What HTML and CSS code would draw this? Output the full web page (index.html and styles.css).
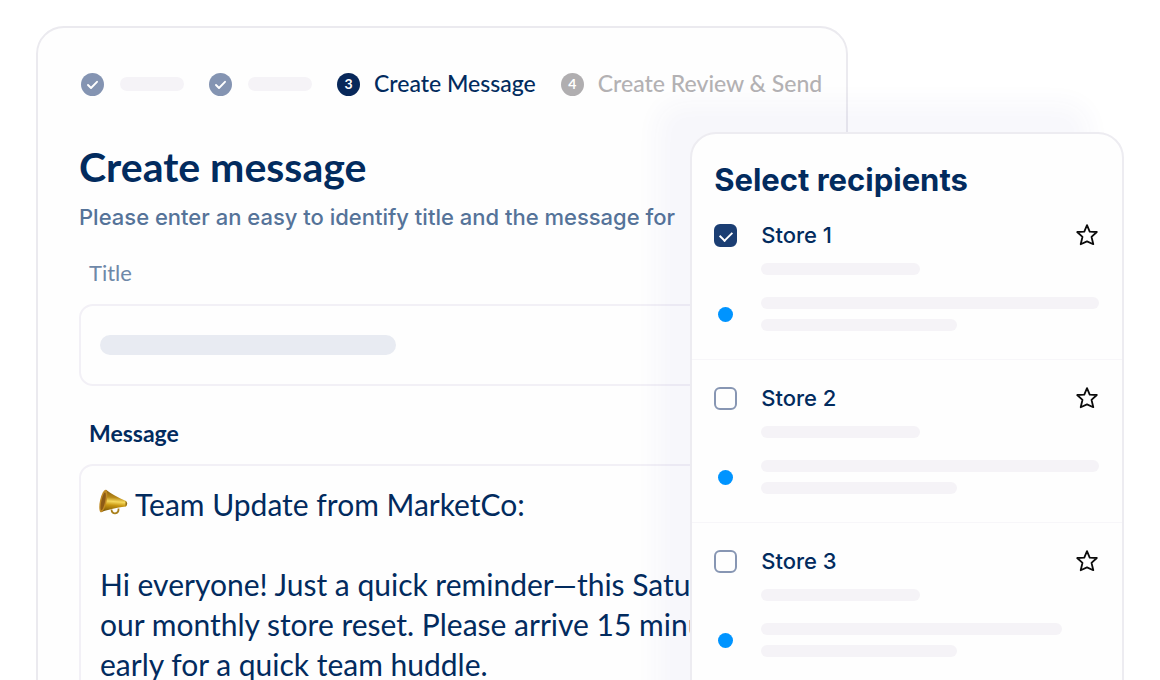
FILE: index.html
```
<!DOCTYPE html>
<html lang="en">

<head>
<meta charset="utf-8">
<meta name="viewport" content="width=device-width, initial-scale=1">
<title>Create message</title>
<link rel="stylesheet" href="styles.css">
</head>

<body>

<!-- shared icons -->
<svg class="sprite" aria-hidden="true">
  <symbol id="check" viewBox="0 0 23 23">
    <path d="M7 12 10 15 16 8.800" fill="none" stroke="#fff" stroke-width="1.9" stroke-linecap="round" stroke-linejoin="round"/>
  </symbol>
  <symbol id="star" viewBox="0 0 24 24">
    <path d="M12 2.2 14.700 8.600 21.800 9 16.500 13.800 18.300 21.200 12 18.400 5.700 21.200 7.500 13.800 2.200 9 9.300 8.600Z" fill="none" stroke="#0b0b0b" stroke-width="1.8" stroke-linejoin="round"/>
  </symbol>
</svg>

<main class="stage">

  <section class="composer">
    <ol class="steps">
      <li class="step done"><span class="dot"><svg><use href="#check"/></svg></span><span class="step-bar"></span></li>
      <li class="step done"><span class="dot"><svg><use href="#check"/></svg></span><span class="step-bar"></span></li>
      <li class="step current"><span class="dot">3</span><span class="step-name">Create Message</span></li>
      <li class="step"><span class="dot">4</span><span class="step-name">Create Review &amp; Send</span></li>
    </ol>

    <h1>Create message</h1>
    <p class="intro">Please enter an easy to identify title and the message for</p>

    <label class="title-label" for="title">Title</label>
    <div class="field">
      <input id="title" class="title-input" type="text">
      <span class="title-bar"></span>
    </div>

    <label class="message-label" for="message">Message</label>
    <div class="field message-field">
      <textarea id="message" class="message-input" spellcheck="false">Team Update from MarketCo:

Hi everyone! Just a quick reminder—this Saturday is
our monthly store reset. Please arrive 15 minutes
early for a quick team huddle.</textarea>
      <svg class="megaphone" viewBox="0 0 30 26" aria-hidden="true">
        <defs>
          <linearGradient id="gold" x1="0.1" y1="0" x2="0" y2="1">
            <stop offset="0" stop-color="#8a5f10"/>
            <stop offset=".3" stop-color="#b98a18"/>
            <stop offset=".48" stop-color="#f6d95c"/>
            <stop offset=".65" stop-color="#c8960f"/>
            <stop offset="1" stop-color="#6b4a07"/>
          </linearGradient>
        </defs>
        <path d="M12.500 20.500c0 5.500 7.500 5 7-1" fill="none" stroke="#a9801c" stroke-width="1.8"/>
        <path d="M7 .8C11 4 20 9 27 12q2.400 2.500 0 5.500C20 18.500 11 20 1.800 23.200Z" fill="url(#gold)"/>
        <ellipse cx="4.300" cy="12" rx="3.300" ry="11.500" transform="rotate(12 4.300 12)" fill="#c08a24"/>
        <ellipse cx="4.200" cy="12.400" rx="1.900" ry="9" transform="rotate(12 4.200 12.400)" fill="#8c5a16"/>
        <path d="M26.500 11.800q3.400 2.800 0 5.800z" fill="#8e6a1a"/>
      </svg>
    </div>
  </section>

  <section class="recipients">
    <h2>Select recipients</h2>
    <ul class="stores">
      <li class="store">
        <input id="store1" type="checkbox" checked>
        <label for="store1">Store 1</label>
        <button class="star" type="button" aria-label="Favourite Store 1"><svg><use href="#star"/></svg></button>
        <span class="bar bar-name"></span>
        <span class="unread"></span>
        <div class="lines"><span class="bar"></span><span class="bar bar-short"></span></div>
      </li>
      <li class="store">
        <input id="store2" type="checkbox">
        <label for="store2">Store 2</label>
        <button class="star" type="button" aria-label="Favourite Store 2"><svg><use href="#star"/></svg></button>
        <span class="bar bar-name"></span>
        <span class="unread"></span>
        <div class="lines"><span class="bar"></span><span class="bar bar-short"></span></div>
      </li>
      <li class="store">
        <input id="store3" type="checkbox">
        <label for="store3">Store 3</label>
        <button class="star" type="button" aria-label="Favourite Store 3"><svg><use href="#star"/></svg></button>
        <span class="bar bar-name"></span>
        <span class="unread"></span>
        <div class="lines"><span class="bar bar-mid"></span><span class="bar bar-short"></span></div>
      </li>
    </ul>
  </section>

</main>

</body>
</html>
```

FILE: styles.css
```
* {
  box-sizing: border-box;
}

body {
  margin: 0;
  background: #fff;
  color: #022b5e;
  font-family: Lato, "Liberation Sans", sans-serif;
}

.sprite {
  position: absolute;
  width: 0;
  height: 0;
}

.stage {
  position: relative;
  height: 100vh;
  padding: 26px 36px 0;
  overflow: hidden;
}

/* message form */
.composer {
  width: 74.6%;
  min-height: 100vh;
  padding: 44px 26px 0 41px;
  border: 2px solid #ebeaef;
  border-radius: 28px;
  background: #fefefe;
}

.steps {
  display: flex;
  align-items: center;
  gap: 25px;
  height: 24px;
  margin: 0 0 0 2px;
  padding: 0;
  list-style: none;
  white-space: nowrap;
}

.step {
  display: flex;
  align-items: center;
  gap: 14px;
  color: #b3b1b3;
  font-size: 23px;
  font-weight: 500;
  line-height: 24px;
}

.step.done {
  gap: 16px;
}

.step.current {
  color: #022b5e;
}

.step-name {
  padding-bottom: 3px;
}

.dot {
  display: flex;
  align-items: center;
  justify-content: center;
  width: 23px;
  height: 23px;
  border-radius: 50%;
  background: #b0aeb0;
  color: #fff;
  font-size: 14px;
  font-weight: 700;
}

.done .dot {
  background: #8494b2;
}

.current .dot {
  background: #08285a;
}

.dot svg {
  width: 23px;
  height: 23px;
}

.step-bar {
  width: 64px;
  height: 14px;
  border-radius: 7px;
  background: #f5f3f7;
}

h1 {
  margin: 47px 0 0;
  font-size: 41px;
  font-weight: 700;
  line-height: 48px;
}

.intro {
  margin: 11px 0 0;
  color: #557399;
  font-family: Inter, "Liberation Sans", sans-serif;
  font-size: 22px;
  font-weight: 500;
  line-height: 30px;
  white-space: nowrap;
}

.title-label,
.message-label {
  display: block;
  margin-left: 10px;
  font-size: 22px;
  line-height: 30px;
}

.title-label {
  margin-top: 26px;
  color: #6f88a8;
}

.message-label {
  margin-top: 32px;
  font-size: 23px;
  font-weight: 700;
}

.field {
  position: relative;
  margin-top: 16px;
}

.title-input,
.message-input {
  display: block;
  width: 100%;
  border: 2px solid #f2f0f6;
  border-radius: 14px;
  outline: 0;
  background: none;
  color: inherit;
  font: 30px/40px Lato, "Liberation Sans", sans-serif;
}

.title-input {
  height: 82px;
  padding: 0 19px;
}

.title-bar {
  position: absolute;
  top: 31px;
  left: 21px;
  width: 296px;
  height: 20px;
  border-radius: 10px;
  background: #e8ebf2;
}

.message-input {
  height: 400px;
  padding: 18px 19px;
  overflow: hidden;
  resize: none;
  text-indent: 35px;
  white-space: pre;
}

.megaphone {
  position: absolute;
  top: 25px;
  left: 20px;
  width: 30px;
  height: 26px;
}

/* recipients panel, over the form */
.recipients {
  position: absolute;
  top: 132px;
  right: 36px;
  width: 37.4%;
  min-height: 100vh;
  border: 2px solid #edecf1;
  border-radius: 26px;
  background: #fefefe;
  box-shadow: -34px -30px 24px rgba(70, 50, 170, .035);
  font-family: Inter, "Liberation Sans", sans-serif;
}

h2 {
  margin: 0;
  padding: 29px 22px 0;
  font-size: 31px;
  font-weight: 700;
  line-height: 34px;
}

.stores {
  margin: 0;
  padding: 0;
  list-style: none;
}

.store {
  display: grid;
  grid-template-columns: 23px 1fr 24px;
  column-gap: 24px;
  align-items: center;
  padding: 23px 23px 28px 22px;
  border-bottom: 1px solid #f7f6f9;
}

.store label {
  font-size: 22px;
  font-weight: 500;
  line-height: 30px;
}

.store input {
  width: 23px;
  height: 23px;
  margin: 0;
  border: 2px solid #8796b3;
  border-radius: 6px;
  appearance: none;
  background: #fefefe;
}

.store input:checked {
  border-color: #1b3e73;
  background: #1b3e73;
}

/* tick */
.store input:checked::after {
  content: "";
  display: block;
  width: 6px;
  height: 10px;
  margin: 3px auto 0;
  border: solid #fff;
  border-width: 0 2px 2px 0;
  transform: rotate(45deg);
}

.star {
  width: 24px;
  height: 24px;
  padding: 0;
  border: 0;
  background: none;
}

.star svg {
  display: block;
  width: 24px;
  height: 24px;
}

.bar {
  display: block;
  height: 12px;
  border-radius: 6px;
  background: #f5f3f7;
}

.bar-name {
  grid-column: 2 / 4;
  width: 47%;
  margin: 13px 0 22px;
}

.unread {
  justify-self: center;
  width: 15px;
  height: 15px;
  border-radius: 50%;
  background: #0094ff;
}

.lines {
  display: grid;
  grid-column: 2 / 4;
  gap: 10px;
}

.bar-short {
  width: 58%;
}

.bar-mid {
  width: 89%;
}
```
